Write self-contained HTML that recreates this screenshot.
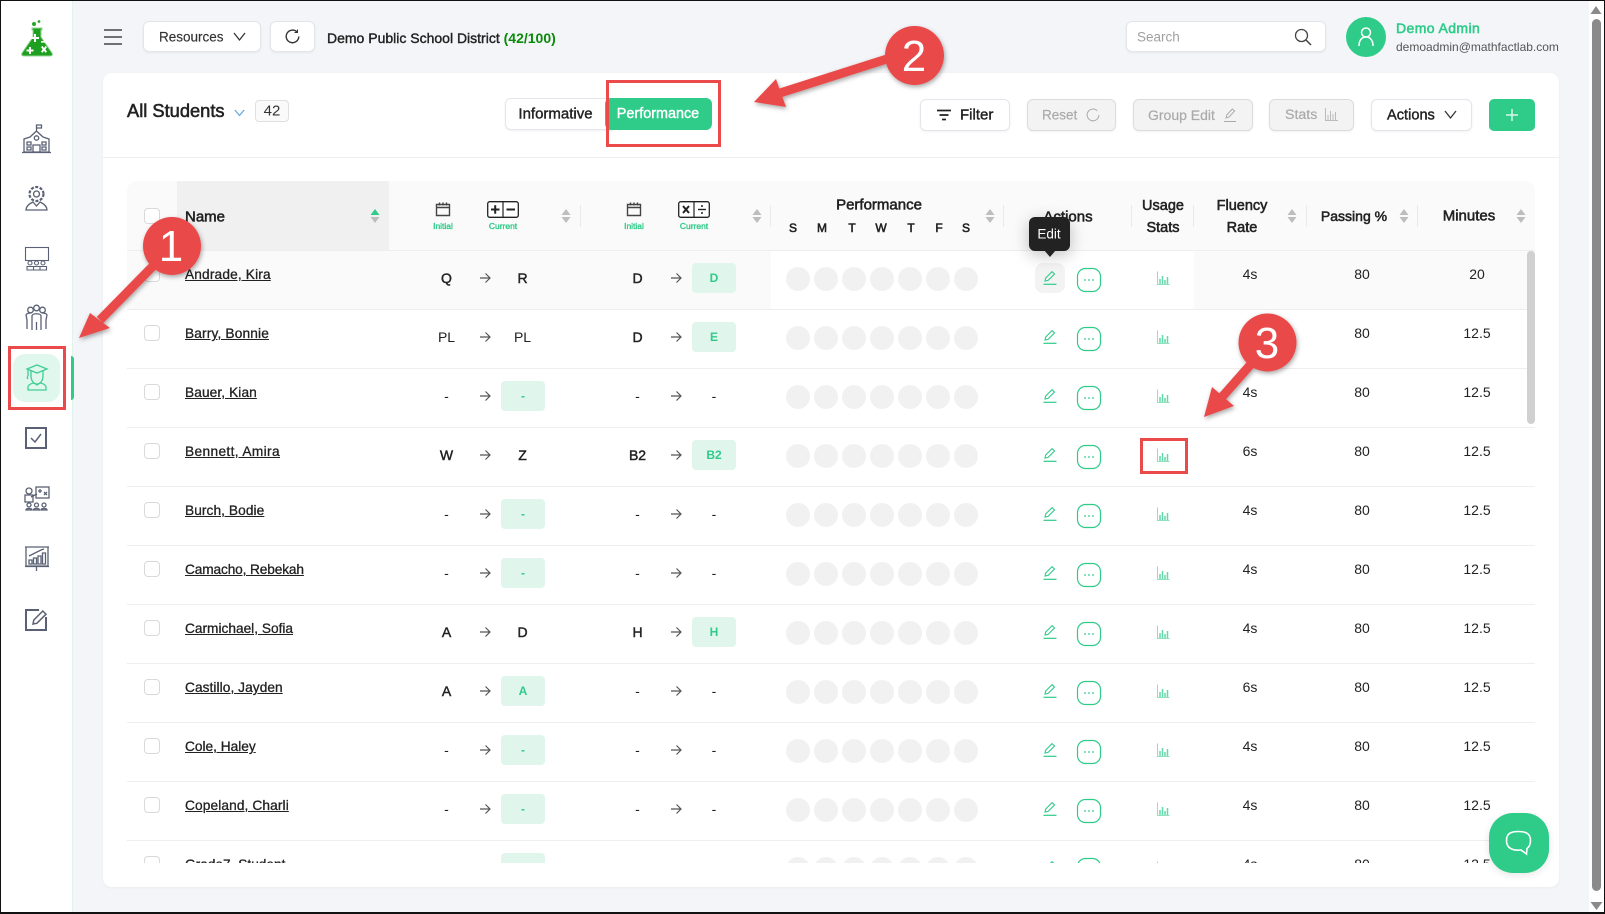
<!DOCTYPE html>
<html lang="en"><head><meta charset="utf-8"><title>Students</title>
<style>
*{box-sizing:border-box}
html,body{margin:0;padding:0}
body{width:1605px;height:914px;overflow:hidden;position:relative;background:#f3f5f9;font-family:"Liberation Sans",sans-serif;color:#222;font-size:14px}
.abs{position:absolute}
.t{position:absolute;white-space:nowrap;transform:translate(-50%,-50%);line-height:1}
.l{position:absolute;white-space:nowrap;transform:translateY(-50%);line-height:1}
.med{-webkit-text-stroke:.4px currentColor}
.med2{-webkit-text-stroke:.55px currentColor}
.btn{position:absolute;background:#fff;border:1px solid #e3e5ea;border-radius:6px;box-shadow:0 1px 2px rgba(0,0,0,.06)}
.dis{background:#f3f3f3;border-color:#dcdcdc}
#side{position:absolute;left:0;top:0;width:73px;height:914px;background:#fff;border-right:1px solid #dff5ec}
#card{position:absolute;left:103px;top:73px;width:1456px;height:814px;background:#fff;border-radius:9px;box-shadow:0 1px 3px rgba(0,0,0,.04)}
#thead{position:absolute;left:127px;top:181px;width:1408px;height:70px;background:#fafafa;border-radius:10px 10px 0 0;border-bottom:1px solid #eee}
#nameh{position:absolute;left:177px;top:181px;width:212px;height:69px;background:#f0f0f0}
.sep{position:absolute;width:1px;height:22px;top:205px;background:#eaeaea}
.gr{color:#2ecb89;font-size:8.5px;-webkit-text-stroke:.35px #2ecb89}
#clip{position:absolute;left:127px;top:251px;width:1408px;height:612px;overflow:hidden}
.r{position:absolute;left:0;width:1408px;height:59px;border-bottom:1px solid #eee}
.hl{position:absolute;top:0;height:58px;background:#fafafa}
.cb{position:absolute;left:17px;top:15px;width:16px;height:16px;border:1px solid #d9d9d9;border-radius:4px;background:#fff}
.nm{position:absolute;left:58px;top:16px;line-height:16px;font-size:13.7px;color:#222;text-decoration:underline;white-space:nowrap;-webkit-text-stroke:.3px #222}
.c{position:absolute;top:27px;transform:translate(-50%,-50%);line-height:1;font-size:14px;color:#222;white-space:nowrap;font-style:normal}
.s{-webkit-text-stroke:.45px #222}
.a1{left:319.5px}.a2{left:395.5px}.b1{left:510.5px}.b2{left:587px}
.bd{position:absolute;top:12px;width:44px;height:30px;margin-left:-22px;background:#e0f6ec;border-radius:4px;color:#2ecb89;font-size:12px;font-weight:700;line-height:30px;text-align:center}
.ar{position:absolute;top:21px;width:12px;height:12px}
.ar1{left:352px}.ar2{left:543px}
.cir{position:absolute;left:659px;top:16px;width:192px;height:24px}
.act{position:absolute;left:908px;top:12px;width:140px;height:30px}
.v{position:absolute;top:23px;transform:translate(-50%,-50%);line-height:1;font-size:14px;color:#222}
.f{left:1123px}.p{left:1235px}.m{left:1350px}
.sort{position:absolute;width:10px;height:16px;top:208px}
</style></head>
<body>
<svg width="0" height="0" style="position:absolute">
<defs>
<symbol id="ar" viewBox="0 0 12 12"><path d="M1 6h10M6.5 1.5L11 6l-4.5 4.500" fill="none" stroke="#555" stroke-width="1.200"/></symbol>
<symbol id="cir" viewBox="0 0 192 24"><g fill="#f1f1f1"><circle cx="12" cy="12" r="12"/><circle cx="40" cy="12" r="12"/><circle cx="68" cy="12" r="12"/><circle cx="96" cy="12" r="12"/><circle cx="124" cy="12" r="12"/><circle cx="152" cy="12" r="12"/><circle cx="180" cy="12" r="12"/></g></symbol>
<symbol id="act" viewBox="0 0 140 30">
<path d="M10 18l.7-3 6.400-6.400 2.400 2.400-6.400 6.400z" fill="none" stroke="#2ecb89" stroke-width="1.100"/><path d="M8.500 21.300h13" stroke="#2ecb89" stroke-width="1.200"/>
<rect x="42.500" y="5.500" width="23" height="23" rx="8" fill="none" stroke="#2ecb89" stroke-width="1.200"/>
<g fill="#2ecb89"><circle cx="50" cy="17" r=".9"/><circle cx="54" cy="17" r=".9"/><circle cx="58" cy="17" r=".9"/></g>
<path d="M122.500 8.500v13h12" fill="none" stroke="#8fe0bd" stroke-width="1"/>
<path d="M125 21v-5M127.500 21v-8M130 21v-4M132.500 21v-7" stroke="#63d8a8" stroke-width="1.500"/>
</symbol>
<symbol id="sort" viewBox="0 0 10 16"><path d="M5 1l4.500 6h-9z" fill="#bdbdbd"/><path d="M5 15L.5 9h9z" fill="#bdbdbd"/></symbol>
<symbol id="cal" viewBox="0 0 16 16"><path d="M1.500 3.500h13v11h-13zM1.500 6.500h13M4.500 1.500v3M8 1.500v3M11.500 1.500v3" fill="none" stroke="#444" stroke-width="1.400"/></symbol>
<symbol id="pm" viewBox="0 0 32 17"><rect x=".7" y=".7" width="30.600" height="15.600" rx="2" fill="#fff" stroke="#222" stroke-width="1.300"/><path d="M16 1v15" stroke="#222" stroke-width="1.200"/><path d="M4 8.500h8.500M8.200 4.300v8.500M19.500 8.500h8.500" stroke="#222" stroke-width="2"/></symbol>
<symbol id="md" viewBox="0 0 32 17"><rect x=".7" y=".7" width="30.600" height="15.600" rx="2" fill="#fff" stroke="#222" stroke-width="1.300"/><path d="M16 1v15" stroke="#222" stroke-width="1.200"/><path d="M5 5l6 7M11 5l-6 7" stroke="#222" stroke-width="2"/><path d="M20 8.500h8" stroke="#222" stroke-width="1.400"/><circle cx="24" cy="5" r="1" fill="#222"/><circle cx="24" cy="12" r="1" fill="#222"/></symbol>
</defs></svg>

<div id="side"></div>
<!-- logo -->
<svg class="abs" style="left:20px;top:19px" width="36" height="38" viewBox="0 0 36 38">
<circle cx="14" cy="5" r="2" fill="#2aa52a"/><circle cx="19" cy="2.500" r="1.400" fill="#2aa52a"/>
<path d="M12 9h10v2h-1v7l11 16c1 2 0 3-2 3H4c-2 0-3-1-2-3l11-16v-7h-1z" fill="#1f9f1f" stroke="#9ad49a" stroke-width="1"/>
<path d="M14 15h2v3h3v2h-3v3h-2v-3h-3v-2h3zM21 22h6v1.600h-6zM9 28h2v2.500h2.500v2h-2.500V35H9v-2.500H6.500v-2H9zM21 28l1.600-1 1.400 2 1.400-2 1.600 1-1.600 2.400 1.600 2.400-1.600 1-1.400-2-1.400 2-1.600-1 1.600-2.400z" fill="#fff"/>
</svg>
<!-- sidebar icons -->
<svg class="abs" style="left:0;top:120px" width="73" height="520" viewBox="0 120 73 520" fill="none" stroke="#5a6174" stroke-width="1.300">
<!-- school -->
<g transform="translate(0 2)"><path d="M24 150v-13l6-2 6.500-6 6.500 6 6 2v13zM36.500 129v-6h5v3h-5M33 150v-7h7v7M27 140h4v3h-4zM42 140h4v3h-4zM27 145h4v3h-4zM42 145h4v3h-4z"/><circle cx="36.500" cy="136" r="2.200"/><path d="M22 150.500h29"/></g>
<!-- teacher gear -->
<circle cx="36.500" cy="194" r="3"/><circle cx="36.500" cy="194" r="7" stroke-dasharray="3 1.500" stroke-width="2.200"/><path d="M26 210c0-5 5-7 7-8l3.500 4 3.500-4c2 1 7 3 7 8z"/>
<!-- class -->
<rect x="25.500" y="247.500" width="23" height="13" stroke-width="1.100"/><g stroke-width="1.100"><circle cx="30" cy="263" r="2"/><circle cx="36.500" cy="263" r="2"/><circle cx="43" cy="263" r="2"/><path d="M27 270v-3.500h6.500V270zM33.500 270v-3.500H40V270zM40 270v-3.500h6.500V270z"/></g>
<!-- people -->
<circle cx="30.500" cy="310" r="2.800"/><circle cx="36.500" cy="308" r="2.800"/><circle cx="42.500" cy="310" r="2.800"/><path d="M27 329v-9l-1-5c1-2 3-2 5-2M46 329v-9l1-5c-1-2-3-2-5-2M32 330v-14c0-3 9-3 9 0v14M36.500 322v8"/>
<!-- checkbox -->
<rect x="26" y="428" width="20" height="20" stroke-width="2"/><path d="M31 438l4 4 6-8" stroke-width="1.500"/>
<!-- teacher board -->
<circle cx="29" cy="491" r="3"/><rect x="25" y="495" width="8" height="7"/><rect x="36" y="487" width="13" height="11"/><path d="M38 491h4M40 489v4M44 495l3-3M47 495l-3-3M31 497l6-3"/><circle cx="29" cy="505" r="2"/><circle cx="36.500" cy="505" r="2"/><circle cx="44" cy="505" r="2"/><path d="M26 510c0-2 6-2 6 0zM33.500 510c0-2 6-2 6 0zM41 510c0-2 6-2 6 0z"/>
<!-- presentation -->
<path d="M25 547h24M26 547v19h22v-19M25 566.500h24M36.500 567v4"/><path d="M29 564v-4h3v4zM33.500 564v-6h3v6zM38 564v-8h3v8zM42.500 564v-11h3v11zM29 556l6-3 6-3 3-1"/>
<!-- edit -->
<path d="M46 617v13H26v-20h13" stroke-width="2"/><path d="M33 624l.8-4 9-9 3.200 3.200-9 9z" stroke-width="1.500"/>
</svg>
<div class="abs" style="left:13px;top:354px;width:47px;height:48px;background:#e0f7ee;border-radius:12px"></div>
<div class="abs" style="left:71px;top:356px;width:3px;height:44px;background:#2ecb89;border-radius:0 3px 3px 0"></div>
<svg class="abs" style="left:25px;top:363px" width="24" height="28" viewBox="0 0 24 28" fill="none" stroke="#3fce93" stroke-width="1.300">
<path d="M2 6l10-4 10 4-10 4zM6 8v5c0 5 3 8 6 8s6-3 6-8V8M3 7v6M3 13c-1 1-1 2 0 3"/><path d="M3 27v-3c0-2 4-4 6-4l3 2 3-2c2 0 6 2 6 4v3z"/>
</svg>

<!-- top bar -->
<svg class="abs" style="left:104px;top:29px" width="18" height="16" viewBox="0 0 18 16"><path d="M0 1h18M0 8h18M0 15h18" stroke="#444" stroke-width="1.500"/></svg>
<div class="btn" style="left:143px;top:21px;width:118px;height:31px"></div>
<div class="l" style="left:159px;top:37px;font-size:13.500px;color:#333;-webkit-text-stroke:.15px #333">Resources</div>
<svg class="abs" style="left:233px;top:32px" width="13" height="10" viewBox="0 0 13 10"><path d="M1 1l5.500 7L12 1" fill="none" stroke="#333" stroke-width="1.300"/></svg>
<div class="btn" style="left:270px;top:21px;width:45px;height:31px"></div>
<svg class="abs" style="left:285px;top:29px" width="15" height="15" viewBox="0 0 15 15"><path d="M12 3a6.300 6.300 0 1 0 1.800 4.500" fill="none" stroke="#333" stroke-width="1.400"/><path d="M12.500 .5v3H9.500" fill="none" stroke="#333" stroke-width="1"/></svg>
<div class="l med" style="left:327px;top:37.500px;font-size:14px;color:#222">Demo Public School District <span style="color:#0a8a0a;font-weight:700;-webkit-text-stroke:0">(42/100)</span></div>

<div class="btn" style="left:1126px;top:21px;width:200px;height:31px"></div>
<div class="l" style="left:1137px;top:37px;font-size:13.500px;color:#a0a0a0">Search</div>
<svg class="abs" style="left:1294px;top:28px" width="18" height="18" viewBox="0 0 18 18"><circle cx="7.500" cy="7.500" r="6" fill="none" stroke="#444" stroke-width="1.300"/><path d="M12 12l5 5" stroke="#444" stroke-width="1.500"/></svg>
<div class="abs" style="left:1346px;top:17px;width:40px;height:40px;border-radius:50%;background:#2ecb89"></div>
<svg class="abs" style="left:1356px;top:26px" width="20" height="22" viewBox="0 0 20 22" fill="none" stroke="#fff" stroke-width="1.500"><circle cx="10" cy="6.500" r="4.500"/><path d="M3 20c0-6 3-9 7-9s7 3 7 9"/></svg>
<div class="l med2" style="left:1396px;top:28px;font-size:14px;color:#2ecb89;letter-spacing:.4px">Demo Admin</div>
<div class="l" style="left:1396px;top:47px;font-size:12px;color:#555">demoadmin@mathfactlab.com</div>

<!-- card -->
<div id="card"></div>
<div class="abs" style="left:103px;top:157px;width:1456px;height:1px;background:#eee"></div>
<div class="l med2" style="left:127px;top:110.500px;font-size:18.300px;color:#222">All Students</div>
<svg class="abs" style="left:234px;top:109px" width="11" height="8" viewBox="0 0 11 8"><path d="M.8 1l4.700 5.500L10.200 1" fill="none" stroke="#5aa9e6" stroke-width="1.200"/></svg>
<div class="abs" style="left:255px;top:100px;width:34px;height:22px;border:1px solid #e0e0e0;border-radius:4px;background:#fafafa"></div>
<div class="t" style="left:272px;top:111px;font-size:15px;color:#333">42</div>

<div class="btn" style="left:505px;top:98px;width:110px;height:32px;border-radius:6px 0 0 6px"></div>
<div class="t med" style="left:555.500px;top:114px;font-size:15px;color:#222">Informative</div>
<div class="abs" style="left:605px;top:98px;width:107px;height:32px;background:#2ecb89;border-radius:6px"></div>
<div class="t med" style="left:658px;top:114px;font-size:14.400px;color:#fff">Performance</div>

<div class="btn" style="left:920px;top:99px;width:90px;height:32px"></div>
<svg class="abs" style="left:937px;top:109px" width="14" height="12" viewBox="0 0 14 12"><path d="M0 1.500h14M2.500 6h9M5 10.500h4" stroke="#222" stroke-width="1.700"/></svg>
<div class="l med" style="left:960px;top:115px;font-size:15px;color:#222">Filter</div>

<div class="btn dis" style="left:1027px;top:99px;width:89px;height:32px"></div>
<div class="l" style="left:1042px;top:115px;font-size:13.500px;color:#aaa;-webkit-text-stroke:.2px #aaa">Reset</div>
<svg class="abs" style="left:1086px;top:108px" width="14" height="14" viewBox="0 0 15 15"><path d="M12 3a6.300 6.300 0 1 0 1.800 4.500" fill="none" stroke="#aaa" stroke-width="1.100"/></svg>

<div class="btn dis" style="left:1133px;top:99px;width:120px;height:32px"></div>
<div class="l" style="left:1148px;top:115px;font-size:14px;color:#aaa;-webkit-text-stroke:.2px #aaa">Group Edit</div>
<svg class="abs" style="left:1223px;top:107px" width="14" height="16" viewBox="0 0 14 16"><path d="M3 11l.8-3 5.500-6 2.300 2-5.500 6z" fill="none" stroke="#aaa"/><path d="M1 14.500h12" stroke="#aaa"/></svg>

<div class="btn dis" style="left:1269px;top:99px;width:85px;height:32px"></div>
<div class="l" style="left:1285px;top:115px;font-size:14.200px;color:#aaa;-webkit-text-stroke:.2px #aaa">Stats</div>
<svg class="abs" style="left:1325px;top:108px" width="13" height="13" viewBox="0 0 13 13"><path d="M.5 0v12.500h12.500" fill="none" stroke="#bbb"/><path d="M3 12V7M5.500 12V3M8 12V6M10.500 12V4" stroke="#bbb"/></svg>

<div class="btn" style="left:1371px;top:99px;width:101px;height:32px"></div>
<div class="l med" style="left:1387px;top:115.500px;font-size:14.600px;color:#222">Actions</div>
<svg class="abs" style="left:1444px;top:110px" width="13" height="10" viewBox="0 0 13 10"><path d="M1 1l5.500 7L12 1" fill="none" stroke="#333" stroke-width="1.300"/></svg>

<div class="abs" style="left:1489px;top:99px;width:46px;height:32px;background:#2ecb89;border-radius:5px"></div>
<svg class="abs" style="left:1505px;top:108px" width="14" height="14" viewBox="0 0 14 14"><path d="M7 1v12M1 7h12" stroke="#d9f7ea" stroke-width="1.500"/></svg>

<!-- table head -->
<div id="thead"></div>
<div id="nameh"></div>
<div class="abs" style="left:144px;top:208px;width:16px;height:16px;border:1px solid #d9d9d9;border-radius:4px;background:#fff"></div>
<div class="l med2" style="left:185px;top:216.500px;font-size:15px">Name</div>
<svg class="abs" style="left:370px;top:208px" width="10" height="16" viewBox="0 0 10 16"><path d="M5 1l4.500 6h-9z" fill="#2ecb89"/><path d="M5 15L.5 9h9z" fill="#bdbdbd"/></svg>

<svg class="abs" style="left:435px;top:201px" width="16" height="16"><use href="#cal"/></svg>
<svg class="abs" style="left:487px;top:201px" width="32" height="17"><use href="#pm"/></svg>
<div class="t gr" style="left:443px;top:226px">Initial</div>
<div class="t gr" style="left:503px;top:226px">Current</div>
<svg class="sort" style="left:561px"><use href="#sort"/></svg>
<div class="sep" style="left:580px"></div>

<svg class="abs" style="left:626px;top:201px" width="16" height="16"><use href="#cal"/></svg>
<svg class="abs" style="left:678px;top:201px" width="32" height="17"><use href="#md"/></svg>
<div class="t gr" style="left:634px;top:226px">Initial</div>
<div class="t gr" style="left:694px;top:226px">Current</div>
<svg class="sort" style="left:752px"><use href="#sort"/></svg>
<div class="sep" style="left:770px"></div>

<div class="t med2" style="left:879px;top:204.500px;font-size:15px">Performance</div>
<div class="t med2" style="left:793px;top:228px;font-size:12px">S</div>
<div class="t med2" style="left:822px;top:228px;font-size:12px">M</div>
<div class="t med2" style="left:852px;top:228px;font-size:12px">T</div>
<div class="t med2" style="left:881px;top:228px;font-size:12px">W</div>
<div class="t med2" style="left:911px;top:228px;font-size:12px">T</div>
<div class="t med2" style="left:939px;top:228px;font-size:12px">F</div>
<div class="t med2" style="left:966px;top:228px;font-size:12px">S</div>
<svg class="sort" style="left:985px"><use href="#sort"/></svg>
<div class="sep" style="left:1003px"></div>

<div class="t med2" style="left:1068px;top:217px;font-size:15px">Actions</div>
<div class="sep" style="left:1131px"></div>
<div class="t med2" style="left:1163px;top:206px;font-size:14.500px">Usage</div>
<div class="t med2" style="left:1163px;top:228px;font-size:14.500px">Stats</div>
<div class="sep" style="left:1193px"></div>
<div class="t med2" style="left:1242px;top:206px;font-size:14.500px">Fluency</div>
<div class="t med2" style="left:1242px;top:228px;font-size:14.500px">Rate</div>
<svg class="sort" style="left:1287px"><use href="#sort"/></svg>
<div class="sep" style="left:1306px"></div>
<div class="t med2" style="left:1354px;top:216px;font-size:14px">Passing %</div>
<svg class="sort" style="left:1399px"><use href="#sort"/></svg>
<div class="sep" style="left:1417px"></div>
<div class="t med2" style="left:1469px;top:216px;font-size:15px">Minutes</div>
<svg class="sort" style="left:1516px"><use href="#sort"/></svg>

<!-- rows -->
<div id="clip">
<div class="r" style="top:0"><div class="hl" style="left:0;width:644px"></div><div class="hl" style="left:1067px;width:341px"></div><div class="abs" style="left:908px;top:12px;width:30px;height:30px;background:#f3f3f3;border-radius:8px"></div><i class="cb"></i><span class="nm" style="letter-spacing:.16px">Andrade, Kira</span><i class="c a1 s">Q</i><svg class="ar ar1"><use href="#ar"/></svg><i class="c a2 s">R</i><i class="c b1 s">D</i><svg class="ar ar2"><use href="#ar"/></svg><i class="bd" style="left:587px;font-style:normal">D</i><svg class="cir"><use href="#cir"/></svg><svg class="act"><use href="#act"/></svg><span class="v f">4s</span><span class="v p">80</span><span class="v m">20</span></div>
<div class="r" style="top:59px"><i class="cb"></i><span class="nm" style="letter-spacing:.16px">Barry, Bonnie</span><i class="c a1">PL</i><svg class="ar ar1"><use href="#ar"/></svg><i class="c a2">PL</i><i class="c b1 s">D</i><svg class="ar ar2"><use href="#ar"/></svg><i class="bd" style="left:587px;font-style:normal">E</i><svg class="cir"><use href="#cir"/></svg><svg class="act"><use href="#act"/></svg><span class="v f">4s</span><span class="v p">80</span><span class="v m">12.5</span></div>
<div class="r" style="top:118px"><i class="cb"></i><span class="nm" style="letter-spacing:.1px">Bauer, Kian</span><i class="c a1">-</i><svg class="ar ar1"><use href="#ar"/></svg><i class="bd" style="left:396px;font-style:normal">-</i><i class="c b1">-</i><svg class="ar ar2"><use href="#ar"/></svg><i class="c b2">-</i><svg class="cir"><use href="#cir"/></svg><svg class="act"><use href="#act"/></svg><span class="v f">4s</span><span class="v p">80</span><span class="v m">12.5</span></div>
<div class="r" style="top:177px"><i class="cb"></i><span class="nm" style="letter-spacing:.37px">Bennett, Amira</span><i class="c a1 s">W</i><svg class="ar ar1"><use href="#ar"/></svg><i class="c a2 s">Z</i><i class="c b1 s">B2</i><svg class="ar ar2"><use href="#ar"/></svg><i class="bd" style="left:587px;font-style:normal">B2</i><svg class="cir"><use href="#cir"/></svg><svg class="act"><use href="#act"/></svg><span class="v f">6s</span><span class="v p">80</span><span class="v m">12.5</span></div>
<div class="r" style="top:236px"><i class="cb"></i><span class="nm" style="letter-spacing:.08px">Burch, Bodie</span><i class="c a1">-</i><svg class="ar ar1"><use href="#ar"/></svg><i class="bd" style="left:396px;font-style:normal">-</i><i class="c b1">-</i><svg class="ar ar2"><use href="#ar"/></svg><i class="c b2">-</i><svg class="cir"><use href="#cir"/></svg><svg class="act"><use href="#act"/></svg><span class="v f">4s</span><span class="v p">80</span><span class="v m">12.5</span></div>
<div class="r" style="top:295px"><i class="cb"></i><span class="nm" style="letter-spacing:-.13px">Camacho, Rebekah</span><i class="c a1">-</i><svg class="ar ar1"><use href="#ar"/></svg><i class="bd" style="left:396px;font-style:normal">-</i><i class="c b1">-</i><svg class="ar ar2"><use href="#ar"/></svg><i class="c b2">-</i><svg class="cir"><use href="#cir"/></svg><svg class="act"><use href="#act"/></svg><span class="v f">4s</span><span class="v p">80</span><span class="v m">12.5</span></div>
<div class="r" style="top:354px"><i class="cb"></i><span class="nm">Carmichael, Sofia</span><i class="c a1 s">A</i><svg class="ar ar1"><use href="#ar"/></svg><i class="c a2 s">D</i><i class="c b1 s">H</i><svg class="ar ar2"><use href="#ar"/></svg><i class="bd" style="left:587px;font-style:normal">H</i><svg class="cir"><use href="#cir"/></svg><svg class="act"><use href="#act"/></svg><span class="v f">4s</span><span class="v p">80</span><span class="v m">12.5</span></div>
<div class="r" style="top:413px"><i class="cb"></i><span class="nm" style="letter-spacing:.07px">Castillo, Jayden</span><i class="c a1 s">A</i><svg class="ar ar1"><use href="#ar"/></svg><i class="bd" style="left:396px;font-style:normal">A</i><i class="c b1">-</i><svg class="ar ar2"><use href="#ar"/></svg><i class="c b2">-</i><svg class="cir"><use href="#cir"/></svg><svg class="act"><use href="#act"/></svg><span class="v f">6s</span><span class="v p">80</span><span class="v m">12.5</span></div>
<div class="r" style="top:472px"><i class="cb"></i><span class="nm">Cole, Haley</span><i class="c a1">-</i><svg class="ar ar1"><use href="#ar"/></svg><i class="bd" style="left:396px;font-style:normal">-</i><i class="c b1">-</i><svg class="ar ar2"><use href="#ar"/></svg><i class="c b2">-</i><svg class="cir"><use href="#cir"/></svg><svg class="act"><use href="#act"/></svg><span class="v f">4s</span><span class="v p">80</span><span class="v m">12.5</span></div>
<div class="r" style="top:531px"><i class="cb"></i><span class="nm" style="letter-spacing:.12px">Copeland, Charli</span><i class="c a1">-</i><svg class="ar ar1"><use href="#ar"/></svg><i class="bd" style="left:396px;font-style:normal">-</i><i class="c b1">-</i><svg class="ar ar2"><use href="#ar"/></svg><i class="c b2">-</i><svg class="cir"><use href="#cir"/></svg><svg class="act"><use href="#act"/></svg><span class="v f">4s</span><span class="v p">80</span><span class="v m">12.5</span></div>
<div class="r" style="top:590px"><i class="cb"></i><span class="nm">Grade7, Student</span><i class="c a1">-</i><svg class="ar ar1"><use href="#ar"/></svg><i class="bd" style="left:396px;font-style:normal">-</i><i class="c b1">-</i><svg class="ar ar2"><use href="#ar"/></svg><i class="c b2">-</i><svg class="cir"><use href="#cir"/></svg><svg class="act"><use href="#act"/></svg><span class="v f">4s</span><span class="v p">80</span><span class="v m">12.5</span></div>
</div>
<div class="abs" style="left:1527px;top:251px;width:8px;height:173px;background:#d0d0d0;border-radius:4px"></div>

<!-- tooltip -->
<div class="abs" style="left:1029px;top:217px;width:41px;height:34px;background:#222;border-radius:6px;box-shadow:0 4px 16px rgba(0,0,0,.25)"></div>
<div class="abs" style="left:1044px;top:250px;width:0;height:0;border-left:6px solid transparent;border-right:6px solid transparent;border-top:7px solid #222"></div>
<div class="t" style="left:1049px;top:234px;font-size:13.500px;color:#fff">Edit</div>

<!-- chat -->
<div class="abs" style="left:1489px;top:813px;width:60px;height:60px;background:#2ecb89;border-radius:24px;box-shadow:0 2px 8px rgba(0,0,0,.1)"></div>
<svg class="abs" style="left:1505px;top:830px" width="28" height="26" viewBox="0 0 28 26"><path d="M13.500 1.500c6.500 0 12 1.500 12 9 0 4.500-1.500 6.500-3.500 8l-.5 5.500-5.500-4c-1 .2-1.500.2-2.500.2-6.500 0-12-2-12-9.700s5.500-9 12-9z" fill="none" stroke="#fff" stroke-width="1.600"/></svg>

<!-- page scrollbar -->
<div class="abs" style="left:1589px;top:0;width:16px;height:914px;background:#fff"></div>
<div class="abs" style="left:1592px;top:19px;width:9px;height:872px;background:#8a8a8a;border-radius:5px"></div>
<svg class="abs" style="left:1590px;top:6px" width="12" height="8"><path d="M6 0l5.500 8H.5z" fill="#8a8a8a"/></svg>
<svg class="abs" style="left:1590px;top:902px" width="13" height="8"><path d="M6.500 8L.5 0h12z" fill="#8a8a8a"/></svg>

<!-- annotations -->
<svg class="abs" style="left:0;top:0;z-index:20" width="1605" height="914" viewBox="0 0 1605 914">
<defs><filter id="sh" x="-30%" y="-30%" width="160%" height="160%"><feDropShadow dx="1" dy="2" stdDeviation="2.500" flood-color="#000" flood-opacity=".35"/></filter></defs>
<g fill="none" stroke="#ea4a4a" stroke-width="3">
<rect x="9.500" y="347.500" width="55" height="61"/>
<rect x="607.500" y="81.500" width="112" height="64"/>
<rect x="1141.500" y="439.500" width="45" height="33"/>
</g>
<g filter="url(#sh)">
<path d="M100 320L158 261" stroke="#ea4a4a" stroke-width="9"/><path d="M79 338L90 313L110 328Z" fill="#ea4a4a"/>
<circle cx="172" cy="246" r="29" fill="#ea484a"/>
</g>
<g filter="url(#sh)">
<path d="M780 93L890 58" stroke="#ea4a4a" stroke-width="9"/><path d="M754 102L776 79L786 107Z" fill="#ea4a4a"/>
<circle cx="914.500" cy="55.500" r="29.500" fill="#ea484a"/>
</g>
<g filter="url(#sh)">
<path d="M1222 397L1252 363" stroke="#ea4a4a" stroke-width="9"/><path d="M1204 417L1212 387L1234 406Z" fill="#ea4a4a"/>
<circle cx="1267.500" cy="342.500" r="29" fill="#ea484a"/>
</g>
<g fill="#fff" font-family="'Liberation Sans',sans-serif" font-size="44" text-anchor="middle">
<text x="171" y="261">1</text><text x="914" y="71">2</text><text x="1267" y="358">3</text>
</g>
</svg>

<!-- window frame -->
<div class="abs" style="left:0;top:0;width:1605px;height:914px;border:1px solid #111;border-top-width:1.500px;border-bottom-width:2px;z-index:30;pointer-events:none"></div>
</body></html>
